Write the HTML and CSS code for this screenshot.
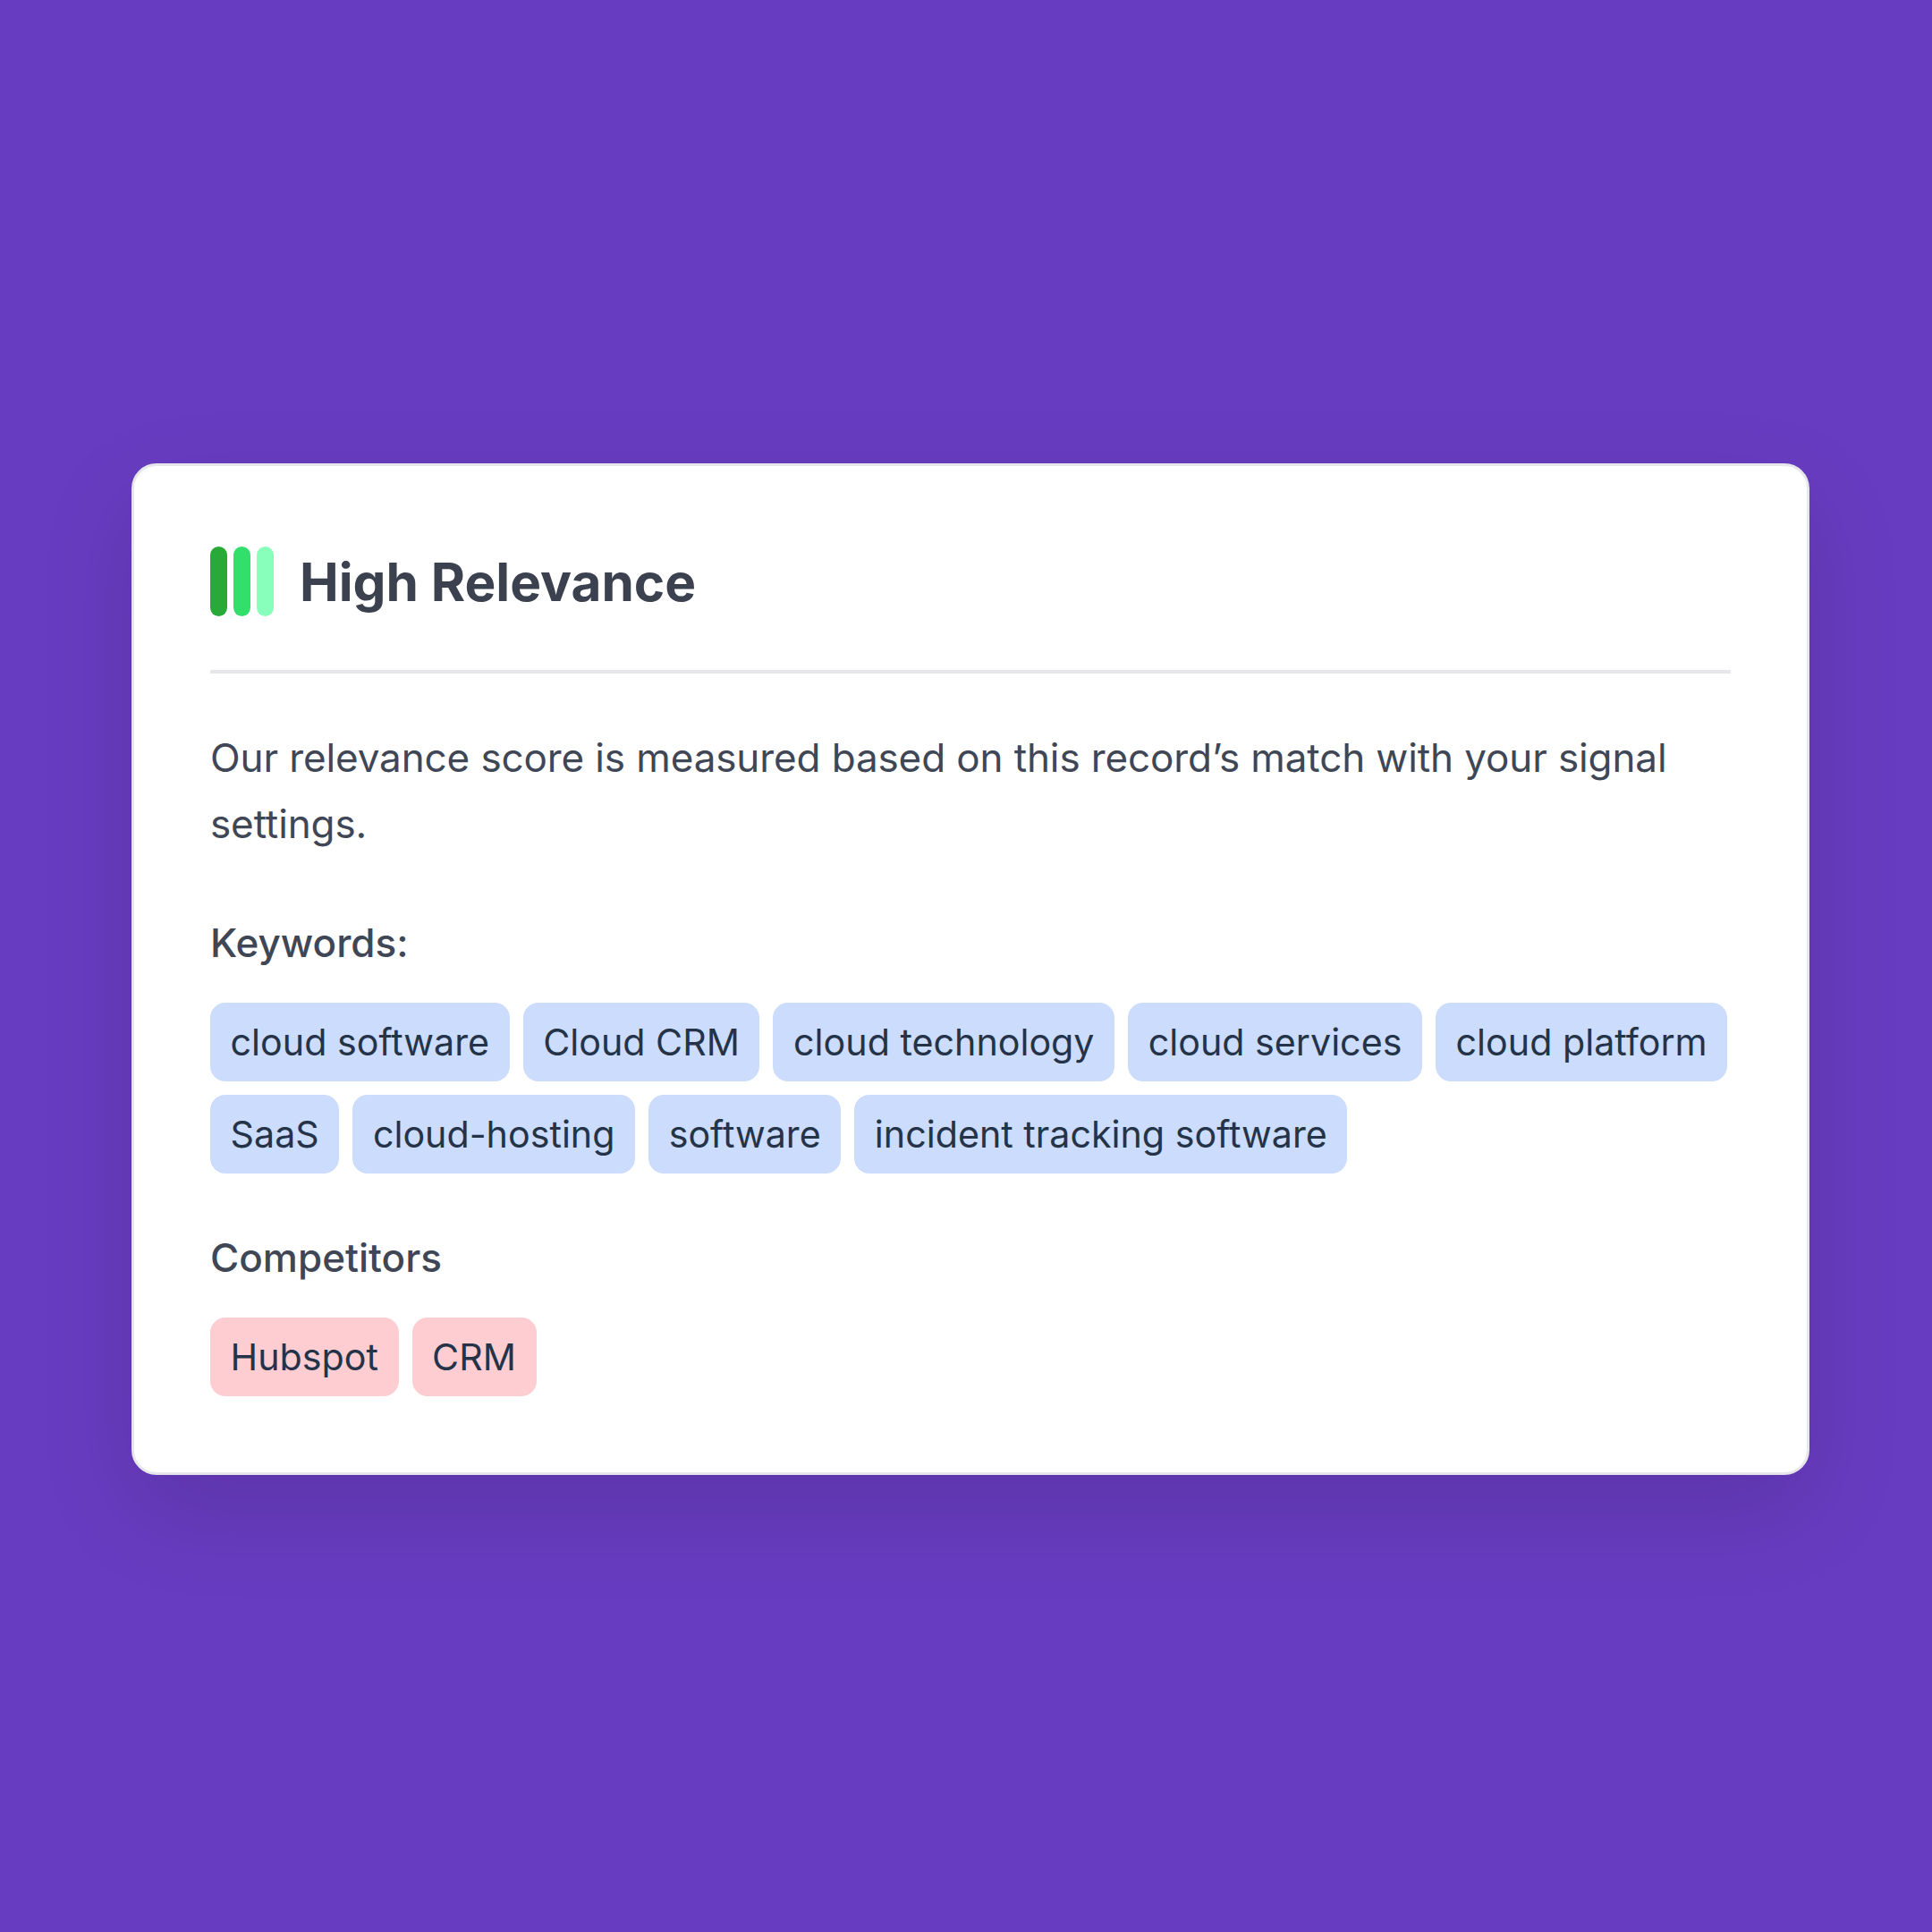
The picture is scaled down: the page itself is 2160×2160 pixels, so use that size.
FILE: index.html
```html
<!DOCTYPE html>
<html lang="en">
<head>
<meta charset="utf-8">
<title>High Relevance</title>
<link rel="stylesheet" href="styles.css">
</head>
<body>
<main class="card">
  <header class="head">
    <div class="bars" aria-hidden="true">
      <span class="bar bar-dark"></span>
      <span class="bar bar-mid"></span>
      <span class="bar bar-light"></span>
    </div>
    <h1 class="title">High Relevance</h1>
  </header>
  <p class="desc">Our relevance score is measured based on this record’s match with your signal settings.</p>
  <h2 class="label label-keywords">Keywords:</h2>
  <ul class="chips">
    <li class="chip chip-blue">cloud software</li>
    <li class="chip chip-blue">Cloud CRM</li>
    <li class="chip chip-blue">cloud technology</li>
    <li class="chip chip-blue">cloud services</li>
    <li class="chip chip-blue">cloud platform</li>
    <li class="chip chip-blue">SaaS</li>
    <li class="chip chip-blue">cloud-hosting</li>
    <li class="chip chip-blue">software</li>
    <li class="chip chip-blue">incident tracking software</li>
  </ul>
  <h2 class="label label-competitors">Competitors</h2>
  <ul class="chips">
    <li class="chip chip-red">Hubspot</li>
    <li class="chip chip-red">CRM</li>
  </ul>
</main>
</body>
</html>
```
FILE: styles.css
```css
* { box-sizing: border-box; }
html, body { margin: 0; padding: 0; }
body {
  width: 2160px;
  height: 2160px;
  background: #683cc0;
  padding: 518px 0 0 147px;
  font-family: Inter, "Liberation Sans", sans-serif;
  overflow: hidden;
}
.card {
  width: 1876px;
  height: 1131px;
  background: #fff;
  border: 3px solid #e5e7eb;
  border-radius: 28px;
  padding: 85px 85px 0;
  box-shadow: 0 40px 110px rgba(0, 0, 0, 0.12);
}
.head {
  display: flex;
  align-items: center;
  gap: 29px;
  height: 147px;
  padding-bottom: 58px;
  border-bottom: 4px solid #e5e7eb;
}
.bars { display: flex; gap: 7.6px; height: 78px; margin-top: 3px; }
.bar { width: 18.6px; border-radius: 10px; }
.bar-dark { background: #28a938; }
.bar-mid { background: #33df6b; }
.bar-light { background: #88ffba; }
.title {
  margin: 4px 0 0;
  font-size: 58.5px;
  line-height: 78px;
  font-weight: 700;
  color: #3b414e;
}
.desc {
  margin: 57px 0 0;
  font-size: 44px;
  line-height: 74px;
  color: #3f4756;
  letter-spacing: -0.11px;
}
.label {
  margin: 0;
  font-size: 44px;
  line-height: 60px;
  font-weight: 500;
  color: #3f4756;
}
.label-keywords { margin-top: 66px; }
.label-competitors { margin-top: 64px; }
.chips {
  list-style: none;
  margin: 37px 0 0;
  padding: 0;
  display: flex;
  flex-wrap: wrap;
  gap: 15px;
}
.chip {
  height: 88px;
  padding: 0 22.6px;
  border-radius: 17px;
  font-size: 41.2px;
  line-height: 88px;
  color: #253348;
}
.chip-blue { background: #cbdcfd; }
.chip-red { background: #fecdd1; }
```
